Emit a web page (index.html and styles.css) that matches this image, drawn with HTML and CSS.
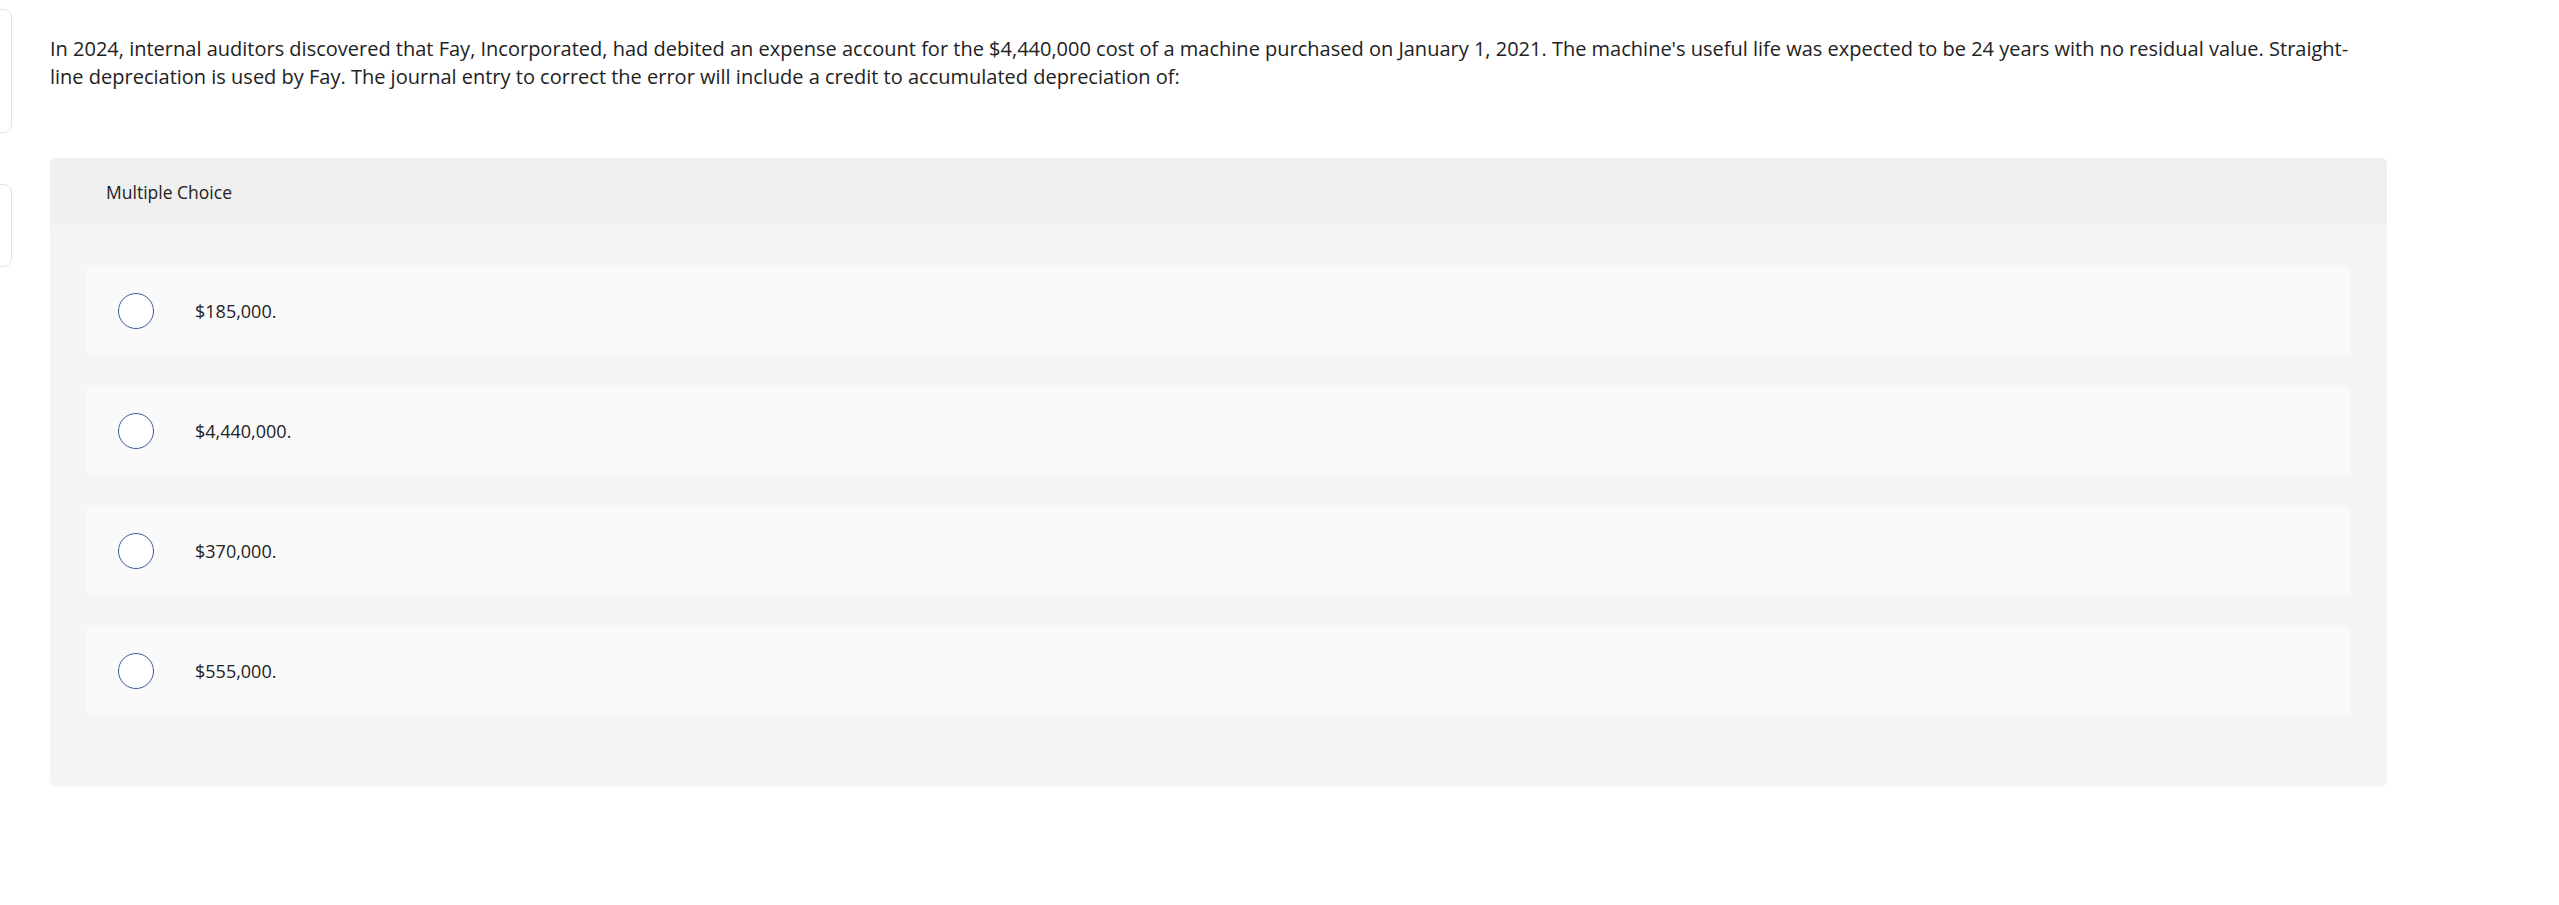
FILE: index.html
```html
<!DOCTYPE html>
<html lang="en">
<head>
<meta charset="utf-8">
<title>Multiple Choice</title>
<link rel="stylesheet" href="styles.css">
</head>
<body>
<div class="page">
  <aside class="rail">
    <div class="rail-box rail-box-1"></div>
    <div class="rail-box rail-box-2"></div>
  </aside>
  <main class="main">
    <p class="question">In 2024, internal auditors discovered that Fay, Incorporated, had debited an expense account for the $4,440,000 cost of a machine purchased on January 1, 2021. The machine's useful life was expected to be 24 years with no residual value. Straight-line depreciation is used by Fay. The journal entry to correct the error will include a credit to accumulated depreciation of:</p>
    <section class="panel">
      <header class="panel-header">Multiple Choice</header>
      <div class="panel-body">
        <label class="option"><span class="radio"></span><span class="option-text">$185,000.</span></label>
        <label class="option"><span class="radio"></span><span class="option-text">$4,440,000.</span></label>
        <label class="option"><span class="radio"></span><span class="option-text">$370,000.</span></label>
        <label class="option"><span class="radio"></span><span class="option-text">$555,000.</span></label>
      </div>
    </section>
  </main>
</div>
</body>
</html>
```
FILE: styles.css
```css
html, body {
  margin: 0;
  padding: 0;
  background: #ffffff;
}
body {
  font-family: "Open Sans", "Liberation Sans", sans-serif;
  color: #222222;
}
.page {
  display: flex;
  align-items: flex-start;
  width: 2559px;
  height: 905px;
  overflow: hidden;
}
.rail {
  width: 13px;
  flex-shrink: 0;
  display: flex;
  flex-direction: column;
}
.rail-box {
  width: 32px;
  margin-left: -20px;
  box-sizing: border-box;
  border: 1px solid #e4e4e4;
  border-radius: 8px;
}
.rail-box-1 {
  margin-top: 9px;
  height: 124px;
}
.rail-box-2 {
  margin-top: 51px;
  height: 83px;
}
.main {
  margin-left: 37px;
  width: 2337px;
}
.question {
  margin: 35px 0 0 0;
  max-width: 2322px;
  font-size: 20px;
  line-height: 28px;
  color: #222222;
}
.panel {
  margin-top: 67px;
  background: #f5f5f5;
  border-radius: 6px;
  overflow: hidden;
}
.panel-header {
  height: 67px;
  background: #f0f0f0;
  display: flex;
  align-items: center;
  padding-left: 56px;
  font-size: 17.5px;
}
.panel-body {
  display: flex;
  flex-direction: column;
  gap: 32px;
  padding: 42px 37px 72px 35px;
}
.option {
  height: 88px;
  background: #fafafa;
  border-radius: 6px;
  display: flex;
  align-items: center;
  padding-left: 33px;
}
.radio {
  width: 36px;
  height: 36px;
  box-sizing: border-box;
  border: 1.5px solid #3b5d92;
  border-radius: 50%;
  background: #ffffff;
  flex-shrink: 0;
}
.option-text {
  margin-left: 41px;
  font-size: 18px;
}
```
